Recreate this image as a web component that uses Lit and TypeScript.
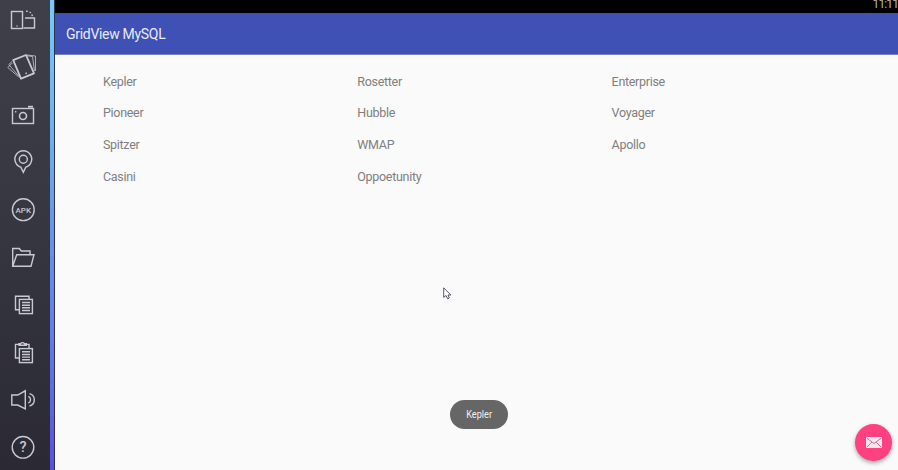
import { LitElement, html, css, svg } from "lit";
import { customElement } from "lit/decorators.js";

const ROW = 47;

const icons = [
  // rotate
  svg`<rect x="11.5" y="11.5" width="11" height="17"/><path d="M25 18H34.5V28H23.5"/><path d="M26 11.2Q31.5 11 32.5 17" stroke-dasharray="1.6 2"/><path d="M16.5 26h1"/>`,
  // shake
  svg`<path stroke-width="1.8" stroke-linejoin="round" d="M13.2 60.2L26 55L34 73.3L21 78.7Z"/><path stroke-width=".8" d="M12 61.5L8.8 64.5L20 77.5M12.3 63L7.8 67.5L18.5 76.8M27 55L35.5 56V71M27 55.8L32.5 56.5L34.5 71"/><path d="M25.4 73.6l1.4-.6"/>`,
  // camera
  svg`<rect x="12.5" y="108.5" width="21" height="15"/><circle cx="23" cy="116" r="3.5" stroke-width="1.6"/><path d="M28 106.7H33" stroke-width="1.8"/><path d="M15 111.7h1.4"/>`,
  // location
  svg`<path d="M23.3 172.3L20.8 167.2A8.4 8.4 0 1 1 25.8 167.2Z"/><circle cx="23.3" cy="159.3" r="4"/>`,
  // apk
  svg`<circle cx="23.3" cy="209.7" r="10.9"/><text class="apk" x="23.3" y="212.5">APK</text>`,
  // folder
  svg`<path d="M12.7 266V248.5H19.3L21.3 251H30V254.5M16.7 254.7H34L31 266.3H12.7Z"/>`,
  // copy
  svg`<path d="M19 309.8H15.5V296.3H29V299"/><rect x="19.4" y="299.4" width="13" height="14.2"/><path d="M22 302.5h8M22 305.2h8M22 307.8h8M22 310.5h8"/>`,
  // paste
  svg`<path d="M19 358H15.5V344.4H19M26 344.4H29V348.5M19 345.2V343.8H20.5Q22.5 341.5 24.5 343.8H26.3V345.2Z"/><rect x="19.4" y="348.6" width="13" height="14"/><path d="M22 351.8h8M22 354.5h8M22 357.1h8M22 359.8h8"/>`,
  // volume
  svg`<path d="M11.8 395H17.7L25.3 390.8V408.8L17.7 405H11.8Z"/><path d="M28.3 396.4A3.7 3.7 0 0 1 28.3 403.2M29.5 393.6A6.4 6.4 0 0 1 29.5 406"/>`,
  // help
  svg`<circle cx="23" cy="447.3" r="10.8"/><text class="help" x="23" y="452.2">?</text>`,
];

@customElement("side-tools")
class SideTools extends LitElement {
  static styles = css`
    :host {
      display: flex;
      flex-direction: column;
      width: 50px;
      flex: none;
      background: linear-gradient(#3f3f49, #373741 45%, #2b2a34);
    }
    svg {
      display: block;
      width: 50px;
      height: 47px;
      fill: none;
      stroke: #c9c9d2;
      stroke-width: 1.4;
    }
    text {
      fill: #c9c9d2;
      stroke: none;
      text-anchor: middle;
      font-family: Roboto, sans-serif;
      font-weight: 500;
    }
    .apk {
      font-size: 8px;
    }
    .help {
      font-size: 14.5px;
    }
  `;
  render() {
    return icons.map(
      (icon, i) => html`<svg viewBox="0 ${i * ROW} 50 ${ROW}">${icon}</svg>`
    );
  }
}

@customElement("app-root")
class AppRoot extends LitElement {
  static styles = css`
    :host {
      display: flex;
      position: relative;
      width: 898px;
      height: 470px;
      overflow: hidden;
      font-family: Roboto, sans-serif;
      background: #fafafa;
    }
    .stripe {
      box-sizing: border-box;
      width: 5px;
      flex: none;
      background: linear-gradient(#74cbfb, #6cb0f4 28%, #6795f2 48%, #607cee 72%, #5850e0);
      border-right: 1px solid #30334a;
    }
    .screen {
      flex: 1;
      min-width: 0;
      display: flex;
      flex-direction: column;
    }
    .status {
      height: 13px;
      background: #000;
      color: #b4b4b4;
      font-size: 12px;
      line-height: 8px;
      letter-spacing: -0.9px;
      white-space: nowrap;
      display: flex;
      justify-content: flex-end;
    }
    .bar {
      box-sizing: border-box;
      height: 42px;
      padding-left: 11px;
      background: #3f51b5;
      border-bottom: 1px solid #7681c4;
      color: #e7e9f6;
      font-size: 14px;
      line-height: 43px;
      letter-spacing: -0.3px;
    }
    .grid {
      display: grid;
      grid-template-columns: repeat(3, 254.3px);
      grid-auto-rows: 31.7px;
      padding: 10.7px 0 0 48px;
      color: #808080;
      font-size: 12.5px;
      line-height: 32px;
      letter-spacing: -0.3px;
    }
    .toast {
      position: absolute;
      left: 450px;
      top: 400px;
      width: 58px;
      height: 29px;
      border-radius: 15px;
      background: #666;
      color: #f0f0f0;
      font-size: 10px;
      line-height: 29px;
      text-align: center;
    }
    .toast span {
      display: inline-block;
      transform: scaleX(0.92);
    }
    .fab {
      position: absolute;
      left: 855px;
      top: 423.5px;
      width: 37px;
      height: 37px;
      border-radius: 50%;
      background: #ff4081;
      box-shadow: 0 2px 4px rgba(0, 0, 0, 0.35);
      display: grid;
      place-items: center;
    }
    .cursor {
      position: absolute;
      left: 443px;
      top: 287px;
    }
  `;
  names = [
    "Kepler", "Rosetter", "Enterprise",
    "Pioneer", "Hubble", "Voyager",
    "Spitzer", "WMAP", "Apollo",
    "Casini", "Oppoetunity",
  ];
  render() {
    return html`
      <side-tools></side-tools>
      <div class="stripe"></div>
      <div class="screen">
        <div class="status"><span>11:11</span></div>
        <div class="bar">GridView MySQL</div>
        <div class="grid">${this.names.map((n) => html`<div>${n}</div>`)}</div>
      </div>
      <svg class="cursor" width="9" height="13" viewBox="0 0 9 13">
        <path d="M.7 .8V10.4L3 8.5L4.7 11.8L6.3 11L5 8H7.8Z" fill="#fff" stroke="#444653" stroke-width=".9"/>
      </svg>
      <div class="toast"><span>Kepler</span></div>
      <div class="fab">
        <svg width="16" height="11" viewBox="0 0 16 11">
          <rect width="16" height="11" rx="1" fill="#f8e8ee"/>
          <path d="M1 1.3L8 6.5L15 1.3M1 10L5.8 5.2M15 10L10.2 5.2" fill="none" stroke="#e0698f" stroke-width="1"/>
        </svg>
      </div>
    `;
  }
}
